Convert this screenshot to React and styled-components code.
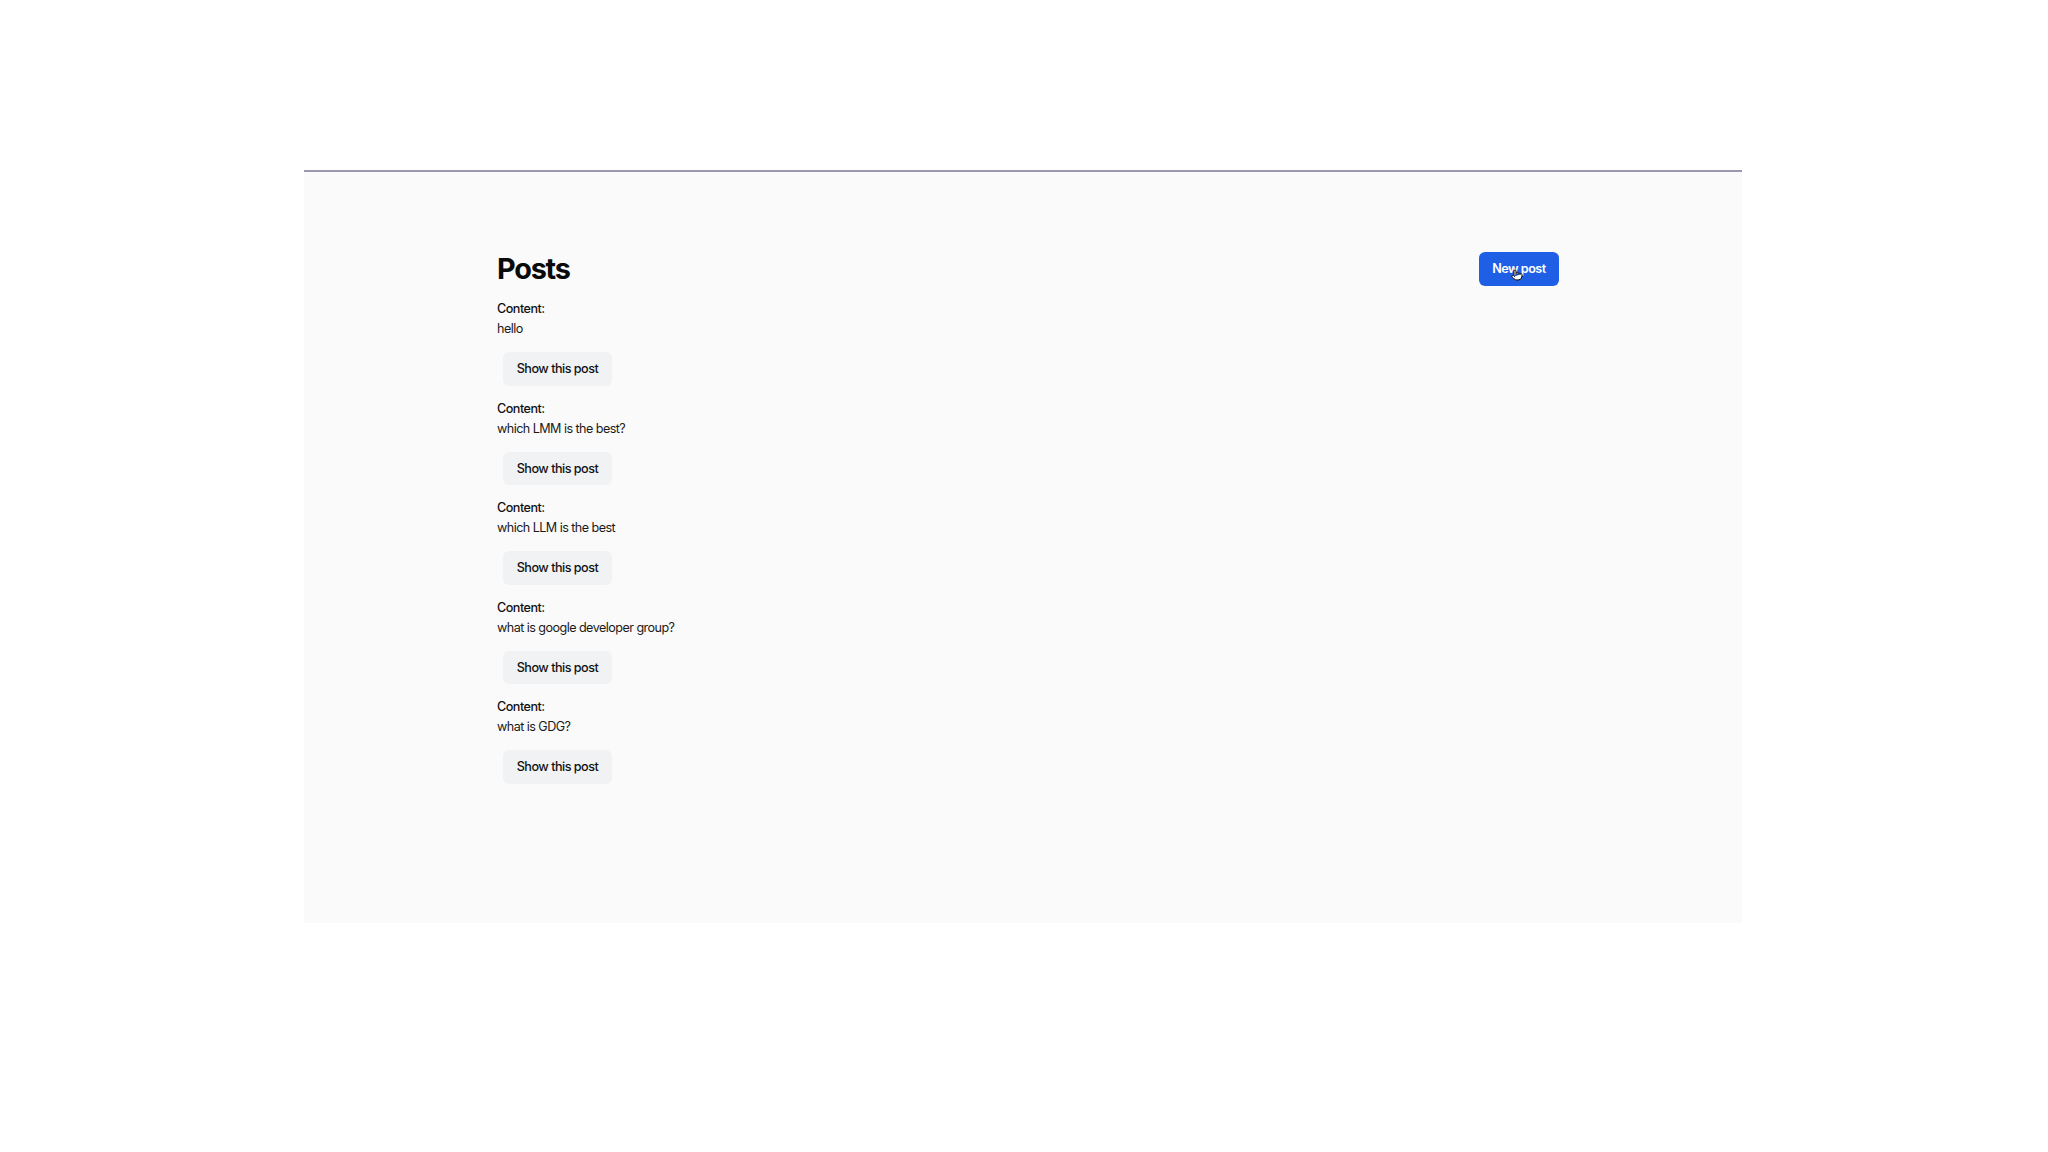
import React from "react";
import styled, { createGlobalStyle } from "styled-components";
import { Pointer } from "lucide-react";

const Global = createGlobalStyle`
  html, body { margin: 0; padding: 0; background: #ffffff; }
  body {
    font-family: Inter, "Noto Sans", "Liberation Sans", sans-serif;
    color: #111111;
    -webkit-font-smoothing: antialiased;
  }
`;

const Page = styled.div`
  padding-top: 170px;
  padding-left: 304px;
  width: 2048px;
  box-sizing: border-box;
`;

const Frame = styled.main`
  width: 1438px;
  height: 753px;
  box-sizing: border-box;
  border-top: 2px solid #9c97ae;
  background: #fafafa;
  padding: 80px 0 0 193px;
`;

const Container = styled.div`
  width: 1062px;
`;

const Header = styled.div`
  display: flex;
  align-items: center;
  justify-content: space-between;
  height: 34px;
`;

const Title = styled.h1`
  margin: 0;
  font-size: 28.8px;
  line-height: 32px;
  font-weight: 700;
  color: #0a0a0a;
  letter-spacing: -1.2px;
`;

const PrimaryButton = styled.a`
  position: relative;
  display: inline-block;
  box-sizing: border-box;
  width: 80px;
  height: 34px;
  padding: 7px 0;
  text-align: center;
  line-height: 20px;
  font-size: 12.6px;
  font-weight: 600;
  letter-spacing: -0.5px;
  color: #ffffff;
  background: #1f5fe6;
  border-radius: 6px;
  text-decoration: none;
`;

const Cursor = styled.span`
  position: absolute;
  left: 32px;
  top: 17px;
  display: flex;
  color: #111;
`;

const List = styled.div`
  display: flex;
  flex-direction: column;
`;

const Item = styled.div`
  padding-top: 13px;
`;

const Label = styled.strong`
  display: block;
  font-size: 12.6px;
  line-height: 20px;
  font-weight: 500;
  letter-spacing: -0.5px;
  color: #111111;
`;

const Body = styled.p`
  margin: 0;
  font-size: 12.6px;
  line-height: 20px;
  letter-spacing: -0.55px;
  color: #1a1a1a;
`;

const SecondaryButton = styled.a`
  display: inline-block;
  box-sizing: border-box;
  margin: 13px 0 0 6px;
  width: 109px;
  height: 33.5px;
  padding: 7px 0;
  text-align: center;
  line-height: 19.5px;
  font-size: 12.6px;
  font-weight: 500;
  letter-spacing: -0.5px;
  color: #111111;
  background: #f0f2f4;
  border-radius: 6px;
  text-decoration: none;
`;

const posts = [
  "hello",
  "which LMM is the best?",
  "which LLM is the best",
  "what is google developer group?",
  "what is GDG?",
];

export default function App() {
  return (
    <>
      <Global />
      <Page>
        <Frame>
          <Container>
            <Header>
              <Title>Posts</Title>
              <PrimaryButton href="#">
                New post
                <Cursor>
                  <Pointer size={12} fill="#ffffff" strokeWidth={2} />
                </Cursor>
              </PrimaryButton>
            </Header>
            <List>
              {posts.map((p, i) => (
                <Item key={i}>
                  <Label>Content:</Label>
                  <Body>{p}</Body>
                  <SecondaryButton href="#">Show this post</SecondaryButton>
                </Item>
              ))}
            </List>
          </Container>
        </Frame>
      </Page>
    </>
  );
}
